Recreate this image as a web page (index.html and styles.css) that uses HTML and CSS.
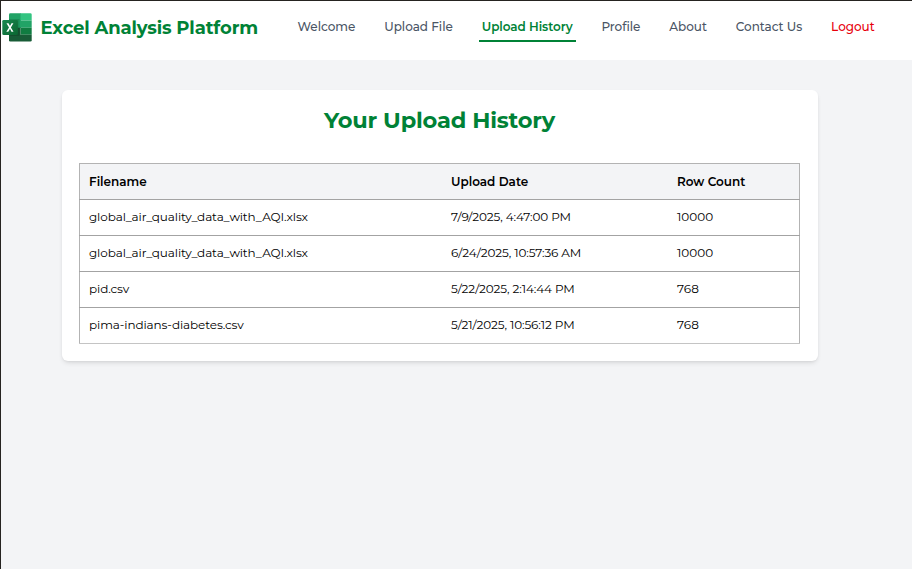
FILE: index.html
```
<!DOCTYPE html>
<html lang="en">
<head>
<meta charset="utf-8">
<title>Excel Analysis Platform</title>
<link rel="stylesheet" href="styles.css">
</head>
<body>
<header class="navbar">
  <div class="brand">
    <svg class="logo" viewBox="0 0 30 29" aria-hidden="true">
      <defs>
        <linearGradient id="tile" x1="0" y1="0" x2="1" y2="1"><stop offset="0" stop-color="#18884f"/><stop offset="1" stop-color="#0b6631"/></linearGradient>
        <clipPath id="sheet"><rect x="7" y="0.3" width="22.7" height="28.2" rx="1.3"/></clipPath>
      </defs>
      <g clip-path="url(#sheet)">
        <path fill="#21a366" d="M7 0h12v15H7z"/>
        <path fill="#33c481" d="M18.500 0H30v7.500H18.500z"/>
        <path fill="#21a366" d="M18.500 7.500H30v7.200H18.500z"/>
        <path fill="#107c41" d="M18.500 14.700H30v7H18.500z"/>
        <path fill="#185c37" d="M7 14.700h11.500v7H30V29H7z"/>
        <path fill="#000" opacity=".14" d="M7 6h10.500v17H7z"/>
      </g>
      <rect x="0.300" y="7" width="15.600" height="15" rx="1.300" fill="url(#tile)"/>
      <path fill="#fff" d="M4.300 18.800l2.700-4.300-2.500-4.300h2l1.500 2.900 1.500-2.900h1.900l-2.500 4.300 2.600 4.300h-2L8 15.800l-1.700 3z"/>
    </svg>
    <span class="brand-name">Excel Analysis Platform</span>
  </div>
  <nav class="links">
    <a class="link">Welcome</a>
    <a class="link">Upload File</a>
    <a class="link active">Upload History</a>
    <a class="link">Profile</a>
    <a class="link">About</a>
    <a class="link">Contact Us</a>
    <a class="link logout">Logout</a>
  </nav>
</header>
<main class="card">
  <h1 class="title">Your Upload History</h1>
  <table class="history">
    <colgroup><col class="col-file"><col class="col-date"><col class="col-rows"></colgroup>
    <thead><tr><th>Filename</th><th>Upload Date</th><th>Row Count</th></tr></thead>
    <tbody>
      <tr><td>global_air_quality_data_with_AQI.xlsx</td><td>7/9/2025, 4:47:00 PM</td><td>10000</td></tr>
      <tr><td>global_air_quality_data_with_AQI.xlsx</td><td>6/24/2025, 10:57:36 AM</td><td>10000</td></tr>
      <tr><td>pid.csv</td><td>5/22/2025, 2:14:44 PM</td><td>768</td></tr>
      <tr><td>pima-indians-diabetes.csv</td><td>5/21/2025, 10:56:12 PM</td><td>768</td></tr>
    </tbody>
  </table>
</main>
</body>
</html>
```
FILE: styles.css
```
* { box-sizing: border-box; }
body {
  margin: 0;
  height: 569px;
  overflow: hidden;
  background: #f3f4f6;
  border-top: 1px solid #252320;
  border-left: 1px solid #252320;
  font: 400 12px/18px Montserrat, Inter, "Open Sans", sans-serif;
  color: #000;
}
.navbar {
  height: 59px;
  display: flex;
  align-items: flex-start;
  background: #fff;
}
.brand { display: flex; align-items: flex-start; width: 295px; padding: 12px 0 0 1px; }
.logo { width: 30px; height: 29px; margin-right: 8.500px; flex: none; }
.brand-name { font-size: 18px; line-height: 30px; font-weight: 700; letter-spacing: -.13px; color: #008236; white-space: nowrap; }
.links { display: flex; gap: 22.900px; padding-top: 17px; margin-left: -1.500px; }
.link { padding: 0 3px 4px; height: 24px; font-weight: 500; letter-spacing: -.02px; color: #4a5565; white-space: nowrap; border-bottom: 2px solid transparent; }
.link.active { color: #008236; font-weight: 600; letter-spacing: -.06px; border-color: #008236; }
.link.logout { color: #e7000b; }
.card {
  width: 756px;
  height: 271px;
  margin: 30px 0 0 61px;
  padding: 17px 18px 17px 17px;
  background: #fff;
  border-radius: 6px;
  box-shadow: 0 3px 5px -1px rgba(0,0,0,.1), 0 1px 3px -1px rgba(0,0,0,.1);
}
.title { margin: 0 0 29px; font-size: 22.500px; line-height: 27px; font-weight: 700; letter-spacing: -.2px; color: #008236; text-align: center; }
.history { width: 721px; table-layout: fixed; border-collapse: collapse; border: 1px solid #b3b3b3; }
.col-file { width: 362.500px; }
.col-date { width: 226px; }
.history tr { height: 36px; border-bottom: 1px solid #a3a3a3; }
.history th, .history td { padding: 0 9px; text-align: left; }
.history td { padding-bottom: 2px; letter-spacing: -.1px; }
.history td:last-child { letter-spacing: 0; }
.history th { font-weight: 600; background: #f3f4f6; }
.history tbody tr:last-child { border-bottom-color: #c4c4c4; }
```
